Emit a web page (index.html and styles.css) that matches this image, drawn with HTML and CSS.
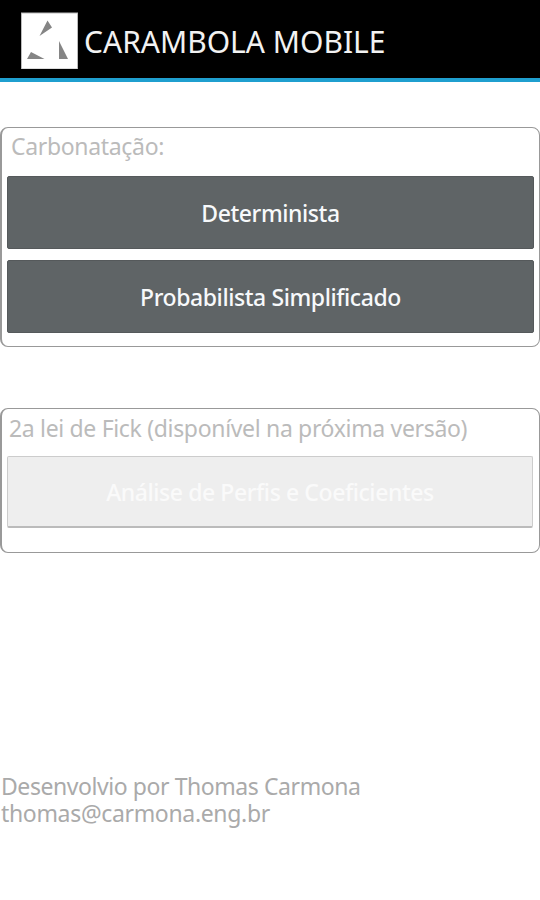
FILE: index.html
```html
<!DOCTYPE html>
<html lang="pt-BR">
<head>
<meta charset="utf-8">
<title>Carambola Mobile</title>
<link rel="stylesheet" href="styles.css">
</head>
<body>
<header class="bar">
<svg class="logo" viewBox="0 0 57 57"><rect x=".5" y="1" width="56" height="56" fill="#fff" stroke="#bbb"/><path d="M26.500 8.500L31 15.500L18.500 24Z M38 29L47 47H38Z M10 40L23.500 47H6Z" fill="#858585"/></svg>
<h1 class="title">CARAMBOLA MOBILE</h1>
</header>
<main>
<section class="panel first">
<h2 class="label">Carbonatação:</h2>
<button class="btn">Determinista</button>
<button class="btn">Probabilista Simplificado</button>
</section>
<section class="panel second">
<h2 class="label">2a lei de Fick (disponível na próxima versão)</h2>
<button class="btn off" disabled>Análise de Perfis e Coeficientes</button>
</section>
</main>
<footer class="credits">
<p>Desenvolvio por Thomas Carmona</p>
<p class="mail">thomas@carmona.eng.br</p>
</footer>
</body>
</html>
```
FILE: styles.css
```css
* { box-sizing: border-box; }
body { margin: 0; height: 900px; background: #fff; font-family: "Noto Sans", sans-serif; overflow: hidden; }
.bar { display: flex; align-items: flex-start; height: 82px; padding-left: 21px; background: #000; border-bottom: 4px solid #1f9fcf; }
.logo { width: 57px; height: 57px; margin-top: 12px; }
.title { margin: 21px 0 0 6px; color: #f2f2f2; font-size: 30px; font-weight: 400; line-height: 41px; white-space: nowrap; }
.panel { border: 1px solid #999; border-left-width: 2px; border-radius: 8px; padding: 3px 5px 0; }
.first { height: 220px; margin-top: 45px; }
.second { height: 145px; margin-top: 61px; }
.label { height: 45px; margin: 0 0 0 4px; color: #bbb; font-size: 23px; font-weight: 400; line-height: 31px; letter-spacing: -0.33px; white-space: nowrap; }
.btn { display: block; width: 100%; height: 72px; margin: 0 0 12px; padding: 1px 0 0; border: 1px solid #55595b; border-radius: 2px; background: #5f6466; color: #f7f9fb; font: 500 23px "Noto Sans", sans-serif; letter-spacing: -0.42px; }
.first .btn { height: 73px; margin-bottom: 11px; }
.second .label { height: 44px; margin-left: 2px; line-height: 33px; }
.off { width: 526px; background: #eee; border-color: #ccc; border-bottom: 2px solid #bbb; color: #fafafa; }
.credits { margin-top: 220px; padding-left: 1px; color: #aaa; font-size: 23px; line-height: 27px; letter-spacing: -0.43px; }
.credits p { margin: 0; }
.credits .mail { letter-spacing: -0.33px; }
```
